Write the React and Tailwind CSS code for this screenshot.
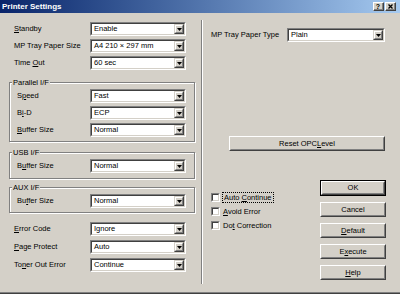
import React from "react";

function U({ children }) {
  return <span className="underline decoration-1 underline-offset-[1px]">{children}</span>;
}

function Arrow() {
  return (
    <div className="flex h-full w-[10px] shrink-0 border border-t-[#d4d0c8] border-l-[#d4d0c8] border-r-[#404040] border-b-[#404040]">
      <div className="flex flex-1 items-center justify-center border border-t-white border-l-white border-r-[#808080] border-b-[#808080] bg-[#d4d0c8]">
        <svg width="5" height="3" viewBox="0 0 5 3">
          <path d="M0 0H5L2.5 3Z" fill="#000" />
        </svg>
      </div>
    </div>
  );
}

function Select({ value, w }) {
  return (
    <div className={`flex h-[14px] ${w} shrink-0 border border-t-[#808080] border-l-[#808080] border-r-white border-b-white`}>
      <div className="flex min-w-0 flex-1 border border-t-[#404040] border-l-[#404040] border-r-[#d4d0c8] border-b-[#d4d0c8] bg-white">
        <span className="flex-1 whitespace-nowrap pl-[2px] leading-[10px] text-black">{value}</span>
        <Arrow />
      </div>
    </div>
  );
}

function Row({ label, value, lw }) {
  return (
    <div className="flex h-[14px] items-center">
      <span className={`${lw} shrink-0 whitespace-nowrap leading-[10px]`}>{label}</span>
      <Select value={value} w="w-[96px]" />
    </div>
  );
}

function Group({ title, children, cls }) {
  return (
    <div className={`relative w-[186px] border border-[#808080] shadow-[1px_1px_0_white,inset_1px_1px_0_white] ${cls}`}>
      <span className="absolute -top-[5px] left-[2px] bg-[#d4d0c8] px-[1px] leading-[9px]">{title}</span>
      {children}
    </div>
  );
}

function Btn({ children, cls, def }) {
  const inner = (
    <div className="flex h-full w-full border border-t-white border-l-white border-r-[#404040] border-b-[#404040]">
      <div className="flex flex-1 items-center justify-center border border-t-[#d4d0c8] border-l-[#d4d0c8] border-r-[#808080] border-b-[#808080] leading-[10px]">
        {children}
      </div>
    </div>
  );
  if (def) {
    return <div className={`flex border border-black ${cls}`}>{inner}</div>;
  }
  return <div className={`flex ${cls}`}>{inner}</div>;
}

function Check({ children, focus }) {
  return (
    <div className="flex h-[14px] items-center">
      <div className="h-[9px] w-[9px] shrink-0 border border-t-[#808080] border-l-[#808080] border-r-white border-b-white">
        <div className="h-full w-full border border-t-[#404040] border-l-[#404040] border-r-[#d4d0c8] border-b-[#d4d0c8] bg-white" />
      </div>
      <span
        className={
          focus
            ? "ml-[2px] whitespace-nowrap border border-dotted border-black px-[1px] leading-[9px]"
            : "ml-[3px] whitespace-nowrap leading-[9px]"
        }
      >
        {children}
      </span>
    </div>
  );
}

function CapBtn({ children }) {
  return (
    <div className="flex h-[9px] w-[11px] border border-t-white border-l-white border-r-[#404040] border-b-[#404040] bg-[#d4d0c8]">
      <div className="flex flex-1 items-center justify-center border-r border-b border-r-[#808080] border-b-[#808080]">
        {children}
      </div>
    </div>
  );
}

export default function App() {
  return (
    <div className="flex h-[294px] w-[400px] flex-col overflow-hidden bg-[#d4d0c8] font-['Liberation_Sans',Arial,sans-serif] text-[7.5px] text-black">
      {/* title bar */}
      <div className="flex h-[13px] shrink-0 items-center bg-gradient-to-r from-[#0a246a] to-[#a6caf0] pl-[2px] pr-[4px]">
        <span className="flex-1 text-[8px] font-bold leading-[10px] text-white">Printer Settings</span>
        <div className="flex gap-[1px]">
          <CapBtn>
            <span className="text-[7px] font-bold leading-[7px]">?</span>
          </CapBtn>
          <CapBtn>
            <svg width="5" height="5" viewBox="0 0 5 5">
              <path d="M0.5 0.5L4.5 4.5M4.5 0.5L0.5 4.5" stroke="#000" strokeWidth="1.3" />
            </svg>
          </CapBtn>
        </div>
      </div>

      {/* body */}
      <div className="flex flex-1 border-b border-b-[#808080]">
        {/* left column */}
        <div className="flex w-[201px] shrink-0 flex-col pl-[9px] pt-[9px]">
          <div className="flex flex-col gap-[3px] pl-[5px]">
            <Row lw="w-[76px]" label={<><U>S</U>tandby</>} value="Enable" />
            <Row lw="w-[76px]" label="MP Tray Paper Size" value="A4 210 × 297 mm" />
            <Row lw="w-[76px]" label={<>Time <U>O</U>ut</>} value="60 sec" />
          </div>

          <Group title="Parallel I/F" cls="mt-[12px] pl-[7px] pt-[6px] pb-[4px]">
            <div className="flex flex-col gap-[3px]">
              <Row lw="w-[73px]" label={<>S<U>p</U>eed</>} value="Fast" />
              <Row lw="w-[73px]" label={<>B<U>i</U>-D</>} value="ECP" />
              <Row lw="w-[73px]" label={<><U>B</U>uffer Size</>} value="Normal" />
            </div>
          </Group>

          <Group title="USB I/F" cls="mt-[10px] pl-[7px] pt-[6px] pb-[5px]">
            <Row lw="w-[73px]" label={<>B<U>u</U>ffer Size</>} value="Normal" />
          </Group>

          <Group title="AUX I/F" cls="mt-[8px] pl-[7px] pt-[6px] pb-[4px]">
            <Row lw="w-[73px]" label={<>Bu<U>f</U>fer Size</>} value="Normal" />
          </Group>

          <div className="mt-[9px] flex flex-col gap-[4px] pl-[5px]">
            <Row lw="w-[76px]" label={<><U>E</U>rror Code</>} value="Ignore" />
            <Row lw="w-[76px]" label={<><U>P</U>age Protect</>} value="Auto" />
            <Row lw="w-[76px]" label={<>To<U>n</U>er Out Error</>} value="Continue" />
          </div>
        </div>

        {/* separator */}
        <div className="mb-[8px] mt-[7px] w-[2px] shrink-0 border-l border-r border-l-[#808080] border-r-white" />

        {/* right column */}
        <div className="flex flex-1 flex-col pl-[8px] pt-[15px]">
          <div className="flex h-[14px] items-center">
            <span className="w-[76px] shrink-0 whitespace-nowrap leading-[10px]">MP Tray Paper Type</span>
            <Select value="Plain" w="w-[98px]" />
          </div>

          <Btn cls="ml-[18px] mt-[94px] h-[15px] w-[156px]">
            Reset OPC <U>L</U>evel
          </Btn>

          <div className="flex items-start">
            <div className="mt-[39px] flex w-[109px] shrink-0 flex-col">
              <Check focus>
                Auto <U>C</U>ontinue
              </Check>
              <Check>
                <U>A</U>void Error
              </Check>
              <Check>
                Do<U>t</U> Correction
              </Check>
            </div>
            <div className="mt-[29px] flex flex-col">
              <Btn def cls="h-[16px] w-[66px]">OK</Btn>
              <div className="mt-[6px] flex flex-col gap-[6px]">
                <Btn cls="h-[15px] w-[66px]">Cancel</Btn>
                <Btn cls="h-[15px] w-[66px]">
                  <U>D</U>efault
                </Btn>
                <Btn cls="h-[15px] w-[66px]">
                  E<U>x</U>ecute
                </Btn>
                <Btn cls="h-[15px] w-[66px]">
                  <U>H</U>elp
                </Btn>
              </div>
            </div>
          </div>
        </div>
      </div>
      <div className="h-[1px] shrink-0 bg-[#404040]" />
    </div>
  );
}
